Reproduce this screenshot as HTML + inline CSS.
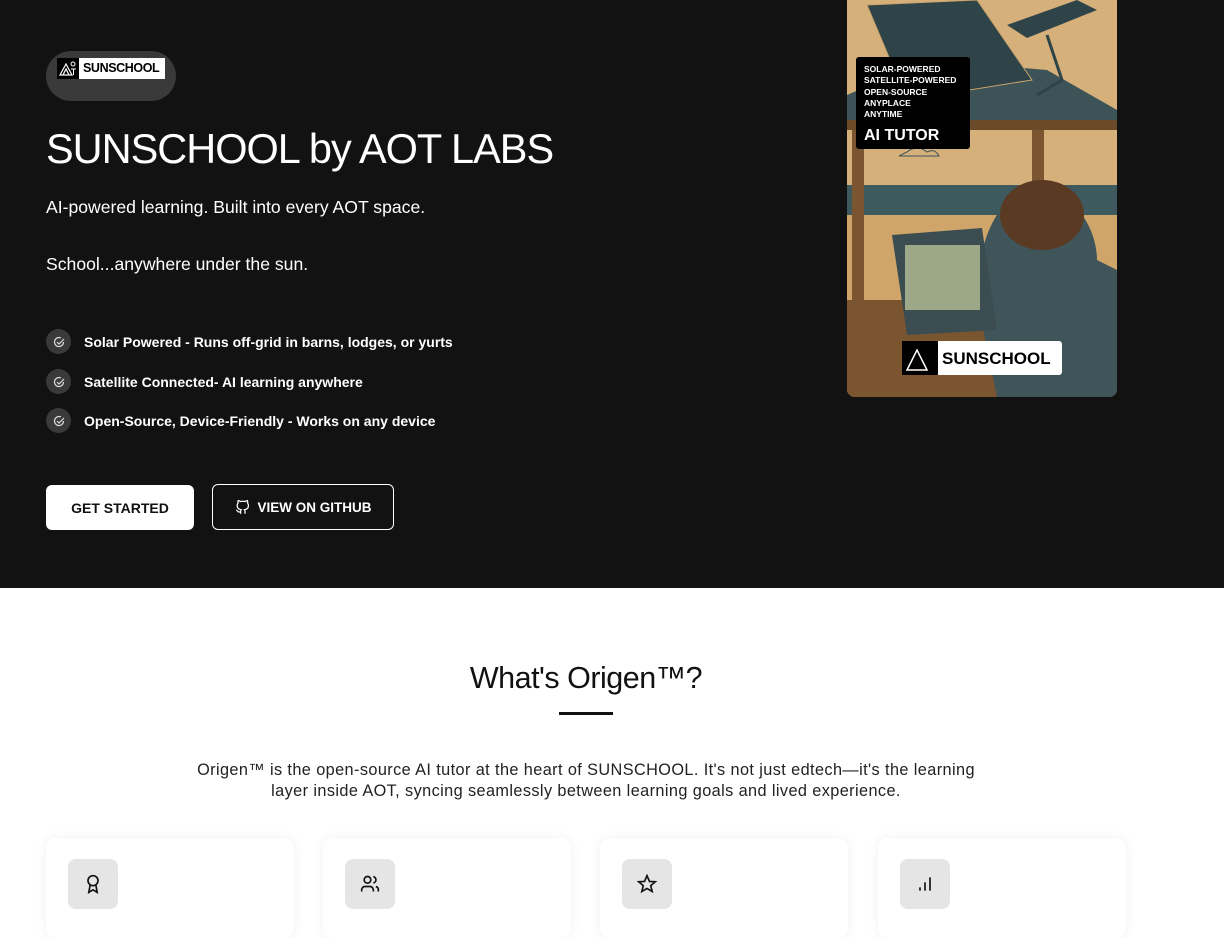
<!DOCTYPE html>
<html><head><meta charset="utf-8"><style>
*{margin:0;padding:0;box-sizing:border-box}
body{width:1224px;height:918px;overflow:hidden;font-family:"Liberation Sans",sans-serif;background:#fff}
.hero{position:absolute;left:0;top:0;width:1224px;height:588px;background:#121212;color:#fff}
.pill{position:absolute;left:46px;top:51px;width:130px;height:50px;border-radius:25px;background:#3a3a3a}
.logo{position:absolute;left:57px;top:58px;height:21px;display:flex}
.logo .ic{width:22px;height:21px;background:#000}
.logo .tx{background:#fff;color:#000;font-weight:bold;font-size:12.5px;line-height:21px;padding:0 4px;letter-spacing:-.4px;width:86px}
h1{position:absolute;left:46px;top:125px;font-size:41.5px;font-weight:normal;letter-spacing:-1px}
.p{position:absolute;left:46px;font-size:17.6px}
.li{position:absolute;left:46px;display:flex;align-items:center;font-size:14px;font-weight:bold}
.li .c{width:25px;height:25px;border-radius:50%;background:#3a3a3a;margin-right:13px;display:flex;align-items:center;justify-content:center}
.b1{position:absolute;left:46px;top:485px;width:148px;height:45px;background:#fff;color:#111;border-radius:6px;font-weight:bold;font-size:14px;display:flex;align-items:center;justify-content:center}
.b2{position:absolute;left:212px;top:484px;width:182px;height:46px;border:1px solid #fff;border-radius:6px;font-weight:bold;font-size:13.5px;display:flex;align-items:center;justify-content:center;gap:8px}
.art{position:absolute;left:847px;top:0;width:270px;height:397px;border-radius:0 0 8px 8px;overflow:hidden;background:#d8b27c}
h2{position:absolute;left:46px;width:1080px;top:661px;text-align:center;font-size:30.5px;font-weight:normal;color:#111;letter-spacing:-.5px}
.ul{position:absolute;left:559px;top:712px;width:54px;height:3px;background:#111}
.desc{position:absolute;left:166px;width:840px;top:760px;text-align:center;font-size:16.3px;line-height:21px;color:#222;letter-spacing:.4px}
.card{position:absolute;top:838px;width:248px;height:100px;border-radius:10px;background:#fff;box-shadow:0 0 12px rgba(0,0,0,.06)}
.card .i{position:absolute;left:22px;top:21px;width:50px;height:50px;border-radius:8px;background:#e5e5e5;display:flex;align-items:center;justify-content:center}
</style></head><body>
<div class="hero">
<div class="pill"></div>
<div class="logo"><div class="ic"><svg width="22" height="21" viewBox="0 0 22 21"><path d="M3 17L9 6L15 17ZM6 17L9 11L12 17" stroke="#fff" fill="none" stroke-width="1.2"/><circle cx="16" cy="6" r="2" stroke="#fff" fill="none"/><path d="M14 11h5M16.5 11v6" stroke="#fff"/></svg></div><div class="tx">SUNSCHOOL</div></div>
<h1>SUNSCHOOL by AOT LABS</h1>
<div class="p" style="top:197px">AI-powered learning. Built into every AOT space.</div>
<div class="p" style="top:254px">School...anywhere under the sun.</div>
<div class="li" style="top:329px"><div class="c"><svg width="12" height="12" viewBox="0 0 12 12"><path d="M10.5 6A4.5 4.5 0 1 1 8 2" stroke="#ddd" fill="none" stroke-width="1.2"/><path d="M4 6l2 2 5-5" stroke="#ddd" fill="none" stroke-width="1.2"/></svg></div>Solar Powered - Runs off-grid in barns, lodges, or yurts</div>
<div class="li" style="top:369px"><div class="c"><svg width="12" height="12" viewBox="0 0 12 12"><path d="M10.5 6A4.5 4.5 0 1 1 8 2" stroke="#ddd" fill="none" stroke-width="1.2"/><path d="M4 6l2 2 5-5" stroke="#ddd" fill="none" stroke-width="1.2"/></svg></div>Satellite Connected- AI learning anywhere</div>
<div class="li" style="top:408px"><div class="c"><svg width="12" height="12" viewBox="0 0 12 12"><path d="M10.5 6A4.5 4.5 0 1 1 8 2" stroke="#ddd" fill="none" stroke-width="1.2"/><path d="M4 6l2 2 5-5" stroke="#ddd" fill="none" stroke-width="1.2"/></svg></div>Open-Source, Device-Friendly - Works on any device</div>
<div class="b1">GET STARTED</div>
<div class="b2"><svg width="15" height="15" viewBox="0 0 24 24" fill="none" stroke="#fff" stroke-width="2"><path d="M9 19c-5 1.5-5-2.5-7-3m14 6v-3.9a3.4 3.4 0 0 0-.9-2.6c3.1-.3 6.4-1.5 6.4-7A5.4 5.4 0 0 0 20 4.8 5 5 0 0 0 19.9 1S18.7.7 16 2.5a13.4 13.4 0 0 0-7 0C6.3.7 5.1 1 5.1 1A5 5 0 0 0 5 4.8a5.4 5.4 0 0 0-1.5 3.7c0 5.4 3.3 6.6 6.4 7a3.4 3.4 0 0 0-.9 2.6V22"/></svg>VIEW ON GITHUB</div>
<div class="art"><svg width="270" height="397" viewBox="0 0 270 397">
<rect width="270" height="397" fill="#d6b07a"/>
<path d="M60 152q10-8 20 0q8-4 12 4h-40z" fill="none" stroke="#3c5458"/>
<rect y="185" width="270" height="30" fill="#3f5a5e"/>
<rect y="215" width="270" height="85" fill="#cfa56a"/>
<path d="M0 95L80 60L200 70L270 110L270 125L0 125Z" fill="#3c5458"/>
<polygon points="20,5 130,0 185,80 60,100" fill="#2f4448" stroke="#c9a36b" stroke-width="1"/>
<polygon points="160,25 230,0 250,10 180,38" fill="#2f4448"/>
<path d="M200 35L215 80L190 95" stroke="#2f4448" stroke-width="3" fill="none"/>
<rect x="0" y="120" width="270" height="10" fill="#6b4a2a"/>
<rect x="5" y="130" width="12" height="175" fill="#7a5530"/>
<rect x="185" y="130" width="12" height="175" fill="#7a5530"/>
<rect x="0" y="300" width="270" height="97" fill="#7a5530"/>
<path d="M130 300C130 240 150 200 180 190C215 180 250 220 250 260L270 270L270 397L150 397Z" fill="#3f5559"/>
<ellipse cx="195" cy="215" rx="42" ry="35" fill="#5a3a22"/>
<polygon points="45,235 135,228 150,330 60,335" fill="#3b4d50"/>
<rect x="58" y="245" width="75" height="65" fill="#9ca888"/>
<rect x="55" y="341" width="160" height="34" rx="3" fill="#fff"/>
<rect x="55" y="341" width="36" height="34" fill="#000"/>
<path d="M60 370L70 350L80 370Z" stroke="#fff" fill="none" stroke-width="1.5"/>
<text x="95" y="364" font-family="Liberation Sans" font-weight="bold" font-size="17" fill="#000">SUNSCHOOL</text>
<rect x="9" y="57" width="114" height="92" rx="3" fill="#000"/>
<text font-family="Liberation Sans" font-weight="bold" font-size="8.5" fill="#fff"><tspan x="17" y="72">SOLAR-POWERED</tspan><tspan x="17" y="83">SATELLITE-POWERED</tspan><tspan x="17" y="95">OPEN-SOURCE</tspan><tspan x="17" y="106">ANYPLACE</tspan><tspan x="17" y="117">ANYTIME</tspan></text>
<text x="17" y="140" font-family="Liberation Sans" font-weight="bold" font-size="16" fill="#fff">AI TUTOR</text>
</svg></div>
</div>
<h2>What's Origen™?</h2>
<div class="ul"></div>
<div class="desc">Origen™ is the open-source AI tutor at the heart of SUNSCHOOL. It's not just edtech—it's the learning<br>layer inside AOT, syncing seamlessly between learning goals and lived experience.</div>
<div class="card" style="left:46px"><div class="i"><svg width="20" height="20" viewBox="0 0 24 24" fill="none" stroke="#111" stroke-width="2"><circle cx="12" cy="8" r="6"/><path d="M15.5 13.5L17 22l-5-3-5 3 1.5-8.5"/></svg></div></div>
<div class="card" style="left:323px"><div class="i"><svg width="20" height="20" viewBox="0 0 24 24" fill="none" stroke="#111" stroke-width="2"><path d="M16 21v-2a4 4 0 0 0-4-4H6a4 4 0 0 0-4 4v2"/><circle cx="9" cy="7" r="4"/><path d="M22 21v-2a4 4 0 0 0-3-3.9M16 3.1a4 4 0 0 1 0 7.8"/></svg></div></div>
<div class="card" style="left:600px"><div class="i"><svg width="20" height="20" viewBox="0 0 24 24" fill="none" stroke="#111" stroke-width="2"><polygon points="12,2 15,9 22,9.3 16.5,14 18.2,21 12,17.3 5.8,21 7.5,14 2,9.3 9,9"/></svg></div></div>
<div class="card" style="left:878px"><div class="i"><svg width="20" height="20" viewBox="0 0 24 24" fill="none" stroke="#111" stroke-width="2"><path d="M12 20V10M18 20V4M6 20v-4"/></svg></div></div>
</body></html>
